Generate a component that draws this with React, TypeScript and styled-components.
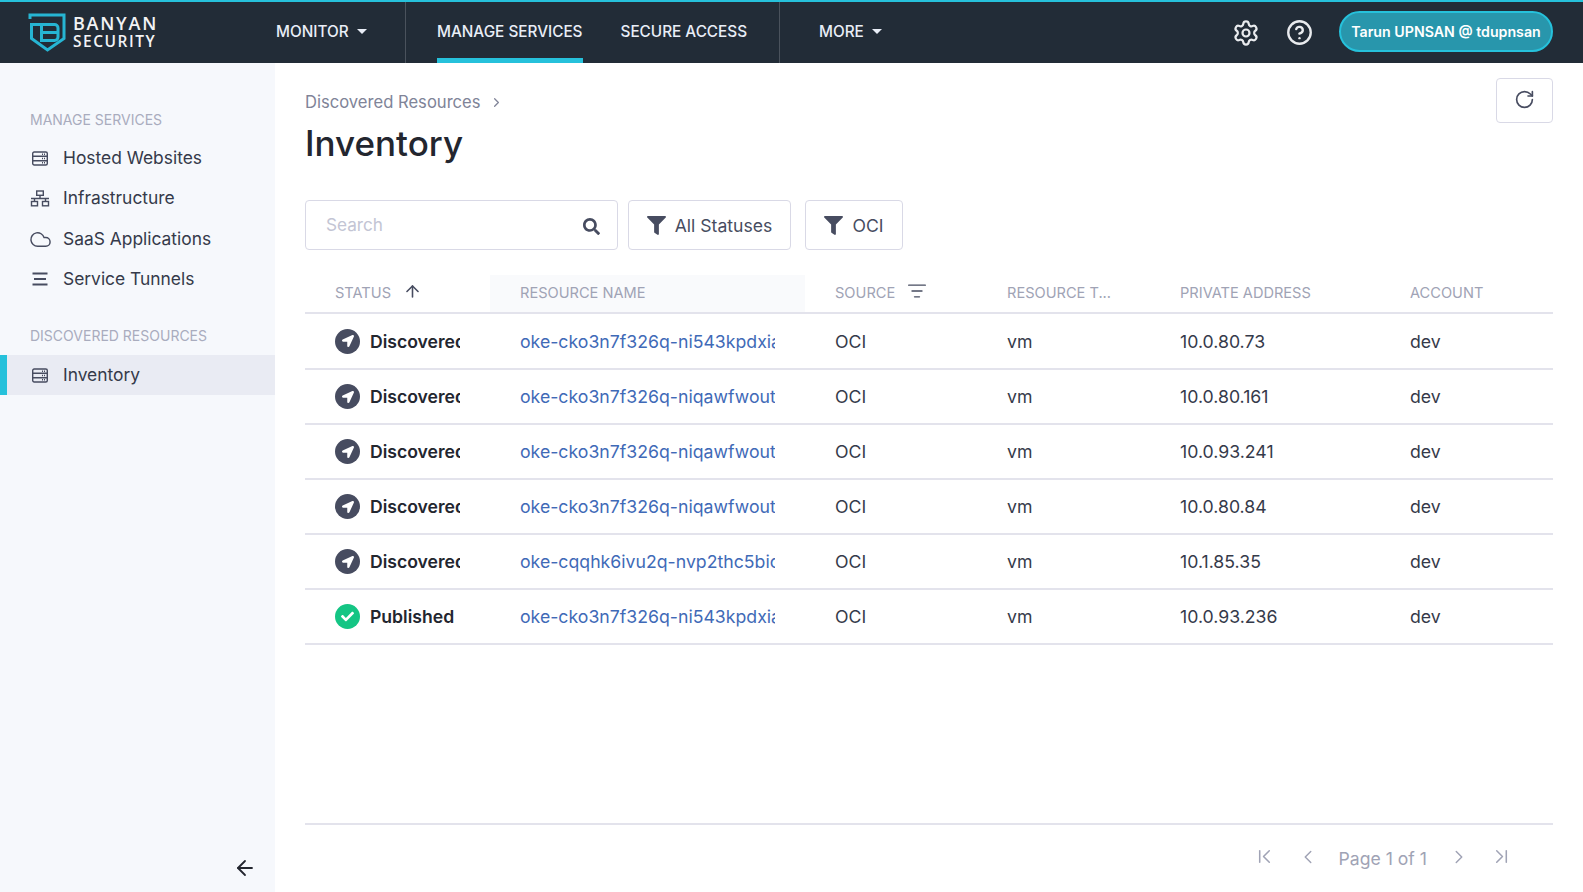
import React from "react";
import styled, { createGlobalStyle } from "styled-components";
import {
  ArrowLeft,
  ArrowUp,
  ChevronFirst,
  ChevronLast,
  ChevronLeft,
  ChevronRight,
  CircleHelp,
  Cloud,
  ListFilter,
  RotateCw,
  Settings,
} from "lucide-react";
import { FaCheck, FaFilter, FaLocationArrow, FaSearch } from "react-icons/fa";

const GlobalStyle = createGlobalStyle`
  html, body {
    margin: 0;
    padding: 0;
    height: 100%;
    background: #fff;
    font-family: Inter, "Liberation Sans", sans-serif;
    color: #23262f;
  }
  * { box-sizing: border-box; }
`;

const Page = styled.div`
  display: flex;
  flex-direction: column;
  width: 1583px;
  height: 892px;
  overflow: hidden;
`;

const TopBar = styled.header`
  display: flex;
  align-items: stretch;
  height: 63px;
  flex: none;
  background: #222c37;
  border-top: 2px solid #26c1db;
  color: #fff;
`;

const LogoArea = styled.div`
  display: flex;
  align-items: center;
  gap: 3px;
  width: 276px;
  padding: 0 0 1px 26px;
  flex: none;
`;

const LogoText = styled.div`
  display: flex;
  flex-direction: column;
  font-family: "Open Sans", sans-serif;
  color: #f2f3f5;
`;

const LogoLine = styled.span<{ $big?: boolean }>`
  height: 18px;
  line-height: 18px;
  font-size: ${(p) => (p.$big ? "18px" : "15.5px")};
  font-weight: 600;
  letter-spacing: ${(p) => (p.$big ? "1.75px" : "1.5px")};
`;

const NavGroup = styled.nav<{ $w: number; $pad: number; $gap?: number; $border?: boolean }>`
  display: flex;
  align-items: stretch;
  gap: ${(p) => p.$gap ?? 0}px;
  width: ${(p) => p.$w}px;
  padding-left: ${(p) => p.$pad}px;
  flex: none;
  border-right: ${(p) => (p.$border ? "1px solid #4a525c" : "none")};
`;

const NavItem = styled.a<{ $active?: boolean }>`
  display: flex;
  align-items: center;
  gap: 8px;
  padding-top: 4px;
  padding-bottom: 2px;
  font-size: 15.3px;
  font-weight: 500;
  color: #e9eef7;
  border-bottom: 5px solid ${(p) => (p.$active ? "#26c1db" : "transparent")};
`;

const Caret = styled.span`
  width: 0;
  height: 0;
  border-left: 5px solid transparent;
  border-right: 5px solid transparent;
  border-top: 5px solid #e9eef7;
`;

const TopRight = styled.div`
  display: flex;
  align-items: center;
  margin-left: auto;
  padding-right: 30px;
  color: #e9ebee;
`;

const TopIcon = styled.span<{ $mr: number }>`
  display: flex;
  margin-right: ${(p) => p.$mr}px;
`;

const UserPill = styled.button`
  height: 41px;
  width: 214px;
  margin-bottom: 2px;
  border-radius: 21px;
  border: 2px solid #26c1db;
  background: #2896ac;
  color: #fff;
  font-family: inherit;
  font-size: 14.2px;
  font-weight: 600;
  padding: 0 0 1px;
`;

const Body = styled.div`
  display: flex;
  flex: 1;
  min-height: 0;
`;

const Sidebar = styled.aside`
  display: flex;
  flex-direction: column;
  width: 275px;
  flex: none;
  padding-top: 47px;
  background: #f6f8fc;
`;

const SideHeading = styled.div<{ $top?: number }>`
  height: 20px;
  line-height: 20px;
  margin-top: ${(p) => p.$top ?? 0}px;
  padding-left: 30px;
  font-size: 14px;
  color: #a9acbe;
`;

const SideList = styled.div<{ $top?: number }>`
  display: flex;
  flex-direction: column;
  margin-top: ${(p) => p.$top ?? 8}px;
`;

const SideItem = styled.a<{ $active?: boolean }>`
  display: flex;
  align-items: center;
  height: ${(p) => (p.$active ? "40px" : "40.25px")};
  padding-left: ${(p) => (p.$active ? "24px" : "31px")};
  padding-bottom: 1px;
  gap: 14px;
  font-size: 17.4px;
  color: #353a4a;
  background: ${(p) => (p.$active ? "#e9ebf3" : "transparent")};
  border-left: ${(p) => (p.$active ? "7px solid #26c1db" : "none")};
`;

const SideIcon = styled.span`
  display: flex;
  justify-content: center;
  width: 18px;
  margin-top: 2px;
  color: #474c60;

  svg {
    flex: none;
  }
`;

const Collapse = styled.div`
  display: flex;
  justify-content: flex-end;
  margin-top: auto;
  padding: 0 18px 12px 0;
  color: #23262f;
`;

const Main = styled.main`
  display: flex;
  flex-direction: column;
  flex: 1;
  min-width: 0;
  padding: 15px 30px 0 30px;
`;

const TitleRow = styled.div`
  display: flex;
  justify-content: space-between;
  align-items: flex-start;
  height: 122px;
`;

const Crumb = styled.div`
  display: flex;
  align-items: center;
  gap: 8px;
  height: 20px;
  margin-top: 14px;
  font-size: 16.6px;
  color: #808498;
`;

const Title = styled.h1`
  margin: 9px 0 0;
  font-size: 35px;
  line-height: 44px;
  font-weight: 500;
  color: #23262f;
`;

const RefreshButton = styled.button`
  display: flex;
  align-items: center;
  justify-content: center;
  width: 57px;
  height: 45px;
  background: #fff;
  border: 1px solid #d9d9e6;
  border-radius: 4px;
  color: #474c60;
  padding: 0 0 3px;
`;

const Toolbar = styled.div`
  display: flex;
  height: 50px;
`;

const SearchBox = styled.div`
  display: flex;
  align-items: center;
  justify-content: space-between;
  width: 313px;
  padding: 0 17px 1px 20px;
  margin-right: 10px;
  border: 1px solid #d9d9e6;
  border-radius: 4px;
  background: #fff;
  font-size: 17.2px;
  color: #c3c5d4;
`;

const SearchGlyph = styled(FaSearch)`
  color: #474c60;
  margin-top: 3px;
`;

const FilterButton = styled.button<{ $w: number; $mr?: number }>`
  display: flex;
  align-items: center;
  justify-content: center;
  gap: 9px;
  width: ${(p) => p.$w}px;
  margin-right: ${(p) => p.$mr ?? 0}px;
  border: 1px solid #d9d9e6;
  border-radius: 4px;
  background: #fff;
  font-family: inherit;
  font-size: 17.6px;
  color: #474c60;
  padding: 0;
`;

const COLS = "185px 315px 172px 173px 230px 173px";

const Table = styled.div`
  display: flex;
  flex-direction: column;
  margin-top: 25px;
`;

const HeadRow = styled.div`
  display: grid;
  grid-template-columns: ${COLS};
  height: 39px;
  border-bottom: 2px solid #e3e3ec;
`;

const HeadCell = styled.div<{ $sorted?: boolean }>`
  display: flex;
  align-items: center;
  gap: 13px;
  padding-left: 30px;
  padding-bottom: 2px;
  font-size: 14.6px;
  color: #a0a3b5;
  background: ${(p) => (p.$sorted ? "#f9fafc" : "transparent")};
`;

const HeadIcon = styled.span`
  display: flex;
  margin-top: -3px;
  margin-left: -1px;
  color: #474c60;
`;

const Row = styled.div`
  display: grid;
  grid-template-columns: ${COLS};
  align-items: center;
  height: 55px;
  border-bottom: 2px solid #e3e3ec;
  font-size: 17.7px;
  color: #353a4a;

  &:nth-child(2) {
    height: 56px;
  }
`;

const StatusCell = styled.div`
  display: flex;
  align-items: center;
  gap: 10px;
  padding-left: 30px;
`;

const StatusDot = styled.span<{ $ok?: boolean }>`
  display: flex;
  align-items: center;
  justify-content: center;
  width: 25px;
  height: 25px;
  flex: none;
  border-radius: 50%;
  color: #fff;
  background: ${(p) => (p.$ok ? "#14c584" : "#474c60")};
`;

const StatusText = styled.span`
  width: 90px;
  overflow: hidden;
  white-space: nowrap;
  font-size: 17.6px;
  font-weight: 600;
  color: #23262f;
`;

const NameCell = styled.a`
  display: block;
  margin-left: 30px;
  width: 255px;
  overflow: hidden;
  white-space: nowrap;
  color: #3f6ab7;
`;

const Cell = styled.div`
  padding-left: 30px;
`;

const Pager = styled.footer`
  display: flex;
  align-items: center;
  justify-content: flex-end;
  margin-top: auto;
  height: 69px;
  border-top: 2px solid #e3e3ec;
  padding: 0 40px 0 0;
  color: #a0a3b5;
  font-size: 17.6px;
`;

const PagerIcon = styled.span<{ $ml?: number; $mr?: number }>`
  display: flex;
  margin-left: ${(p) => p.$ml ?? 0}px;
  margin-right: ${(p) => p.$mr ?? 0}px;
  margin-top: -4px;
`;

const rows = [
  { name: "oke-cko3n7f326q-ni543kpdxia-0", ip: "10.0.80.73" },
  { name: "oke-cko3n7f326q-niqawfwoutq-0", ip: "10.0.80.161" },
  { name: "oke-cko3n7f326q-niqawfwoutq-1", ip: "10.0.93.241" },
  { name: "oke-cko3n7f326q-niqawfwoutq-2", ip: "10.0.80.84" },
  { name: "oke-cqqhk6ivu2q-nvp2thc5bic-0", ip: "10.1.85.35" },
  { name: "oke-cko3n7f326q-ni543kpdxia-1", ip: "10.0.93.236", published: true },
];

function ServerIcon() {
  return (
    <svg width="16" height="15" viewBox="0 0 16 15" fill="none" stroke="currentColor" strokeWidth="1.4">
      <rect x="0.7" y="1" width="14.6" height="13" rx="1.5" />
      <path d="M1 5.3h14M1 9.7h14" />
      <path d="M10 3.2h3.5M10 7.5h3.5M10 11.8h3.5" strokeDasharray="1 1" />
    </svg>
  );
}

function SitemapIcon() {
  return (
    <svg width="20" height="17" viewBox="0 0 20 17" fill="none" stroke="currentColor" strokeWidth="1.4">
      <rect x="6.7" y="1" width="6.6" height="4.3" />
      <path d="M10 5.3v3.2M1 8.5h18M4.5 8.5v3M15.5 8.5v3" />
      <rect x="1.5" y="11.5" width="6" height="4.3" />
      <rect x="12.5" y="11.5" width="6" height="4.3" />
    </svg>
  );
}

function TunnelIcon() {
  return (
    <svg width="16" height="14" viewBox="0 0 16 14" fill="none" stroke="currentColor" strokeWidth="1.8">
      <path d="M0.5 1.5h15M2 7h12M0.5 12.5h15" />
    </svg>
  );
}

function Logo() {
  return (
    <svg width="44" height="44" viewBox="0 0 44 44" fill="none" stroke="#26b5d3" strokeWidth="3">
      <path d="M4 9V5h34v23.5L21.5 40 5.5 28.5V14.5h23a3.5 3.5 0 0 1 3.5 3.5v9a3.5 3.5 0 0 1-3.5 3.5H15.5V14.5" />
      <path d="M15.5 22.5H32" />
    </svg>
  );
}

export default function App() {
  return (
    <Page>
      <GlobalStyle />
      <TopBar>
        <LogoArea>
          <Logo />
          <LogoText>
            <LogoLine $big>BANYAN</LogoLine>
            <LogoLine>SECURITY</LogoLine>
          </LogoText>
        </LogoArea>
        <NavGroup $w={130} $pad={0} $border>
          <NavItem>
            MONITOR <Caret />
          </NavItem>
        </NavGroup>
        <NavGroup $w={374} $pad={31} $gap={38} $border>
          <NavItem $active>MANAGE SERVICES</NavItem>
          <NavItem>SECURE ACCESS</NavItem>
        </NavGroup>
        <NavGroup $w={120} $pad={39}>
          <NavItem>
            MORE <Caret />
          </NavItem>
        </NavGroup>
        <TopRight>
          <TopIcon $mr={26}>
            <Settings size={28} strokeWidth={1.9} />
          </TopIcon>
          <TopIcon $mr={26}>
            <CircleHelp size={27} strokeWidth={2.1} />
          </TopIcon>
          <UserPill>Tarun UPNSAN @ tdupnsan</UserPill>
        </TopRight>
      </TopBar>
      <Body>
        <Sidebar>
          <SideHeading>MANAGE SERVICES</SideHeading>
          <SideList>
            <SideItem>
              <SideIcon>
                <ServerIcon />
              </SideIcon>
              Hosted Websites
            </SideItem>
            <SideItem>
              <SideIcon>
                <SitemapIcon />
              </SideIcon>
              Infrastructure
            </SideItem>
            <SideItem>
              <SideIcon>
                <Cloud size={23} strokeWidth={1.5} />
              </SideIcon>
              SaaS Applications
            </SideItem>
            <SideItem>
              <SideIcon>
                <TunnelIcon />
              </SideIcon>
              Service Tunnels
            </SideItem>
          </SideList>
          <SideHeading $top={27}>DISCOVERED RESOURCES</SideHeading>
          <SideList $top={9}>
            <SideItem $active>
              <SideIcon>
                <ServerIcon />
              </SideIcon>
              Inventory
            </SideItem>
          </SideList>
          <Collapse>
            <ArrowLeft size={24} strokeWidth={1.8} />
          </Collapse>
        </Sidebar>
        <Main>
          <TitleRow>
            <div>
              <Crumb>
                Discovered Resources <ChevronRight size={15} />
              </Crumb>
              <Title>Inventory</Title>
            </div>
            <RefreshButton>
              <RotateCw size={21} strokeWidth={1.9} />
            </RefreshButton>
          </TitleRow>
          <Toolbar>
            <SearchBox>
              Search
              <SearchGlyph size={17} />
            </SearchBox>
            <FilterButton $w={163} $mr={14}>
              <FaFilter size={19} /> All Statuses
            </FilterButton>
            <FilterButton $w={98}>
              <FaFilter size={19} /> OCI
            </FilterButton>
          </Toolbar>
          <Table>
            <HeadRow>
              <HeadCell>
                STATUS
                <HeadIcon>
                  <ArrowUp size={19} />
                </HeadIcon>
              </HeadCell>
              <HeadCell $sorted>RESOURCE NAME</HeadCell>
              <HeadCell>
                SOURCE
                <HeadIcon>
                  <ListFilter size={20} strokeWidth={1.6} />
                </HeadIcon>
              </HeadCell>
              <HeadCell>RESOURCE T...</HeadCell>
              <HeadCell>PRIVATE ADDRESS</HeadCell>
              <HeadCell>ACCOUNT</HeadCell>
            </HeadRow>
            {rows.map((r, i) => (
              <Row key={i}>
                <StatusCell>
                  <StatusDot $ok={r.published}>
                    {r.published ? <FaCheck size={13} /> : <FaLocationArrow size={12} />}
                  </StatusDot>
                  <StatusText>{r.published ? "Published" : "Discovered"}</StatusText>
                </StatusCell>
                <NameCell>{r.name}</NameCell>
                <Cell>OCI</Cell>
                <Cell>vm</Cell>
                <Cell>{r.ip}</Cell>
                <Cell>dev</Cell>
              </Row>
            ))}
          </Table>
          <Pager>
            <PagerIcon $mr={21}>
              <ChevronFirst size={23} strokeWidth={1.6} />
            </PagerIcon>
            <PagerIcon $mr={20}>
              <ChevronLeft size={22} strokeWidth={1.6} />
            </PagerIcon>
            <span>Page 1 of 1</span>
            <PagerIcon $ml={21} $mr={20}>
              <ChevronRight size={22} strokeWidth={1.6} />
            </PagerIcon>
            <PagerIcon>
              <ChevronLast size={23} strokeWidth={1.6} />
            </PagerIcon>
          </Pager>
        </Main>
      </Body>
    </Page>
  );
}
